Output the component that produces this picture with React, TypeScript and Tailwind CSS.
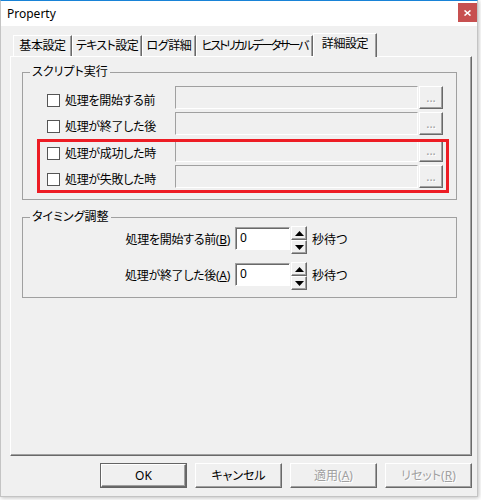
import React from 'react';

const raised =
  'border border-t-white border-l-white border-r-[#696969] border-b-[#696969] shadow-[inset_-1px_-1px_0_#a0a0a0]';

const tabs = [
  { label: '基本設定', cls: 'w-[59px] tracking-[-0.4px]' },
  { label: 'テキスト設定', cls: 'w-[70px] tracking-[-0.6px]' },
  { label: 'ログ詳細', cls: 'w-[54px] tracking-[-0.4px]' },
  { label: 'ヒストリカルデータサーバ', cls: 'w-[117px] tracking-[-2.1px]' },
];

const scripts = [
  { label: '処理を開始する前', cls: '' },
  { label: '処理が終了した後', cls: 'mt-[3px]' },
  { label: '処理が成功した時', cls: 'mt-[4px]' },
  { label: '処理が失敗した時', cls: 'mt-[3px]' },
];

function Tri({ down }: { down?: boolean }) {
  return (
    <svg width="9" height="5" viewBox="0 0 9 5">
      <path d={down ? 'M0 0H9L4.5 5Z' : 'M0 5H9L4.5 0Z'} fill="#000" />
    </svg>
  );
}

function Spin() {
  return (
    <div className="w-[16px] h-[28px] flex flex-col">
      <div className={`h-[14px] flex items-center justify-center bg-[#f0f0f0] ${raised}`}>
        <Tri />
      </div>
      <div className={`h-[14px] flex items-center justify-center bg-[#f0f0f0] ${raised}`}>
        <Tri down />
      </div>
    </div>
  );
}

function Btn({ children, def, disabled }: { children: React.ReactNode; def?: boolean; disabled?: boolean }) {
  return (
    <div className={`w-[87px] h-[25px] ${def ? 'border border-[#646464]' : ''}`}>
      <div
        className={`w-full h-full flex items-center justify-center bg-[#f0f0f0] ${raised} ${
          disabled ? 'text-[#a0a0a0] [text-shadow:1px_1px_0_#fff]' : 'text-black'
        }`}
      >
        {children}
      </div>
    </div>
  );
}

function TimingRow({ label, k, cls }: { label: string; k: string; cls?: string }) {
  return (
    <div className={`flex items-center h-[28px] ${cls ?? ''}`}>
      <div className="w-[207px] text-right tracking-[-0.3px]">
        {label}(<span className="underline">{k}</span>)
      </div>
      <div className="ml-[5px] self-start mt-[1px] w-[55px] h-[23px] bg-white border border-t-[#a0a0a0] border-l-[#a0a0a0] border-b-white border-r-white shadow-[inset_1px_1px_0_#696969] pl-[4px] pt-[3px]">
        0
      </div>
      <div className="ml-[1px]">
        <Spin />
      </div>
      <div className="ml-[5px]">秒待つ</div>
    </div>
  );
}

export default function App() {
  return (
    <div
      className="w-[481px] h-[500px] bg-white text-[12px] leading-[14px] text-black"
      style={{ fontFamily: '"Noto Sans", "Noto Sans CJK JP", sans-serif', fontFeatureSettings: '"palt"' }}
    >
      <div className="w-[478px] h-[497px] flex flex-col bg-[#f0f0f0] border border-[#c4c4c4] border-t-[#1883d7] shadow-[1px_1px_4px_rgba(0,0,0,0.25)]">
        {/* title bar */}
        <div className="h-[25px] bg-white flex items-start justify-between">
          <span className="pl-[6px] self-center text-[12px]">Property</span>
          <div className="mt-[2px] w-[19px] h-[19px] bg-[#c75050] flex items-center justify-center">
            <svg width="7" height="6" viewBox="0 0 7 6">
              <path d="M0.5 0.5L6.5 5.5M6.5 0.5L0.5 5.5" stroke="#fff" strokeWidth="1.6" />
            </svg>
          </div>
        </div>

        <div className="px-[9px] pt-[7px]">
          {/* tabs */}
          <div className="flex items-end h-[24px] pl-[3px] -mb-[1px] relative z-10 whitespace-nowrap">
            {tabs.map((t) => (
              <div
                key={t.label}
                className={`${t.cls} h-[21px] mb-[1px] flex items-center justify-center overflow-hidden border border-b-0 border-t-white border-l-white border-r-[#696969] shadow-[inset_-1px_0_0_#a0a0a0]`}
              >
                {t.label}
              </div>
            ))}
            <div className="w-[64px] h-[24px] pb-[3px] bg-[#f0f0f0] flex items-center justify-center tracking-[-0.4px] border border-b-0 border-t-white border-l-white border-r-[#696969] shadow-[inset_-1px_0_0_#a0a0a0]">
              詳細設定
            </div>
          </div>

          {/* tab panel */}
          <div className="w-[462px] h-[400px] border border-t-white border-l-white border-r-[#696969] border-b-[#696969] shadow-[inset_-1px_-1px_0_#a0a0a0]">
            <fieldset className="relative ml-[11px] mt-[8px] w-[435px] border border-[#a0a0a0] pl-[24px] pr-[13px] pt-[7px] pb-[11px]">
              <legend className="-ml-[17px] px-[2px] leading-[14px]">スクリプト実行</legend>
              {scripts.map((s) => (
                <div key={s.label} className={`flex h-[23px] ${s.cls}`}>
                  <div className="w-[128px] flex items-center pt-[6px]">
                    <div className="w-[13px] h-[13px] bg-white border border-[#555]" />
                    <span className="ml-[5px] tracking-[-0.3px]">{s.label}</span>
                  </div>
                  <div className="flex-1 border border-t-[#a0a0a0] border-l-[#a0a0a0] border-b-white border-r-white" />
                  <div
                    className={`ml-[1px] w-[24px] flex items-center justify-center text-[#a0a0a0] [text-shadow:1px_1px_0_#fff] ${raised}`}
                  >
                    ...
                  </div>
                </div>
              ))}
              <div className="absolute left-[14px] top-[60px] w-[412px] h-[54px] border-[3px] border-[#ed1c24]" />
            </fieldset>

            <fieldset className="ml-[11px] mt-[10px] w-[435px] border border-[#a0a0a0] pt-[2px] pb-[7px]">
              <legend className="ml-[7px] px-[2px] leading-[14px]">タイミング調整</legend>
              <TimingRow label="処理を開始する前" k="B" />
              <TimingRow label="処理が終了した後" k="A" cls="mt-[8px]" />
            </fieldset>
          </div>

          {/* buttons */}
          <div className="mt-[7px] flex justify-end gap-[8px] w-[462px]">
            <Btn def>OK</Btn>
            <Btn>キャンセル</Btn>
            <Btn disabled>
              適用(<span className="underline">A</span>)
            </Btn>
            <Btn disabled>
              リセット(<span className="underline">R</span>)
            </Btn>
          </div>
        </div>
      </div>
    </div>
  );
}
